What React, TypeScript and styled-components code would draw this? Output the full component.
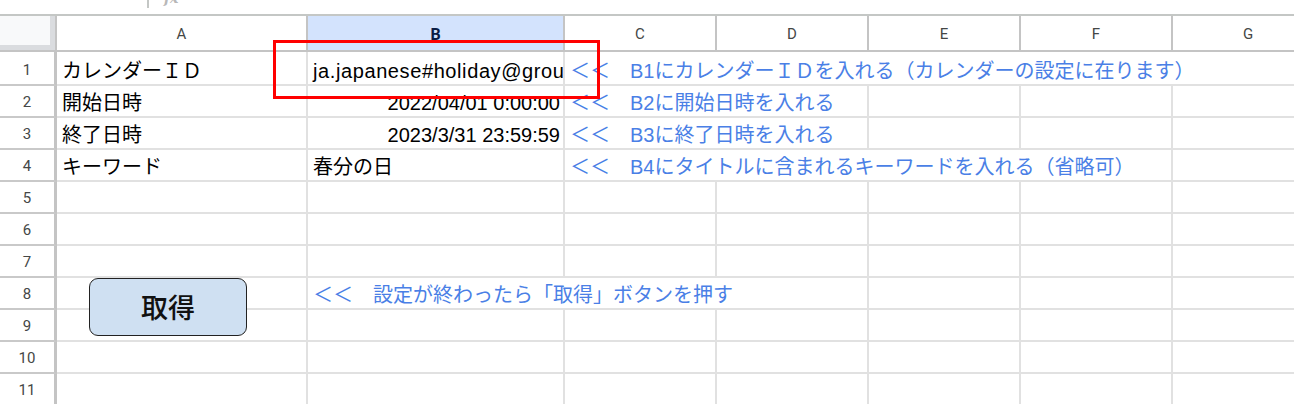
import styled, { createGlobalStyle } from "styled-components";

const GlobalStyle = createGlobalStyle`
    html, body {
        margin: 0;
        padding: 0;
        background: #ffffff;
        overflow: hidden;
    }
    * {
        box-sizing: border-box;
    }
`;

const COLS = "57px 251px 257px 152px 152px 152px 152px 152px";
const FONT = `"Liberation Sans", "Noto Sans CJK JP", sans-serif`;

const Page = styled.div`
    position: relative;
    width: 1294px;
    height: 404px;
    overflow: hidden;
    font-family: ${FONT};
`;

const Toolbar = styled.div`
    display: flex;
    height: 16px;
    border-bottom: 2px solid #c4c7c5;
    overflow: hidden;
`;

const ToolSep = styled.div`
    margin-left: 147px;
    width: 2px;
    height: 8px;
    background: #c4c7c5;
`;

const FxLabel = styled.span`
    margin-left: 15px;
    margin-top: -10px;
    font-family: "DejaVu Serif", serif;
    font-style: italic;
    font-weight: bold;
    font-size: 14px;
    color: #b8b8b8;
`;

const Row = styled.div<{ $h: number }>`
    display: grid;
    grid-template-columns: ${COLS};
    height: ${(p) => p.$h}px;
`;

const Corner = styled.div`
    background: #f8f9fa;
    border-right: 2px solid #c4c4c4;
    border-bottom: 2px solid #c4c4c4;
    box-shadow: inset -5px -5px 0 #dadcdf;
`;

const ColHead = styled.div<{ $active?: boolean }>`
    display: flex;
    align-items: center;
    justify-content: center;
    border-right: 2px solid #c4c4c4;
    border-bottom: 2px solid #c4c4c4;
    background: ${(p) => (p.$active ? "#d3e3fd" : "#ffffff")};
    font-family: Roboto, "Liberation Sans", sans-serif;
    font-size: ${(p) => (p.$active ? 16 : 15)}px;
    font-weight: ${(p) => (p.$active ? 700 : 400)};
    color: ${(p) => (p.$active ? "#0b1d45" : "#444746")};
    padding-top: 2px;
`;

const RowHead = styled.div`
    display: flex;
    align-items: flex-end;
    justify-content: center;
    border-right: 3px solid #c4c4c4;
    border-bottom: 2px solid #c9c9c9;
    padding-bottom: 5px;
    font-family: Roboto, "Liberation Sans", sans-serif;
    font-size: 15px;
    line-height: 17px;
    color: #444746;
`;

const Cell = styled.div<{ $span?: number; $align?: "left" | "right"; $blue?: boolean; $track?: number }>`
    grid-column: span ${(p) => p.$span ?? 1};
    display: flex;
    align-items: flex-end;
    justify-content: ${(p) => (p.$align === "right" ? "flex-end" : "flex-start")};
    padding: 0 3px 1px 5px;
    border-right: 2px solid #e1e1e1;
    border-bottom: 2px solid #e1e1e1;
    overflow: hidden;
    white-space: nowrap;
    font-size: 20px;
    line-height: 24px;
    letter-spacing: ${(p) => p.$track ?? 0}px;
    color: ${(p) => (p.$blue ? "#4a7fe6" : "#000000")};
`;

const RedFrame = styled.div`
    position: absolute;
    left: 273px;
    top: 40px;
    width: 327px;
    height: 59px;
    border: 3px solid #ff0000;
    pointer-events: none;
`;

const GetButton = styled.button`
    position: absolute;
    left: 89px;
    top: 278px;
    width: 158px;
    height: 58px;
    display: flex;
    align-items: center;
    justify-content: center;
    padding: 0 0 2px;
    background: #cfe0f2;
    border: 1.5px solid #222222;
    border-radius: 9px;
    font-family: ${FONT};
    font-size: 27px;
    font-weight: 500;
    color: #111111;
    cursor: pointer;
`;

type CellDef = { text?: string; span?: number; align?: "left" | "right"; blue?: boolean; track?: number };

const columns = ["A", "B", "C", "D", "E", "F", "G"];

const rows: { h: number; cells: CellDef[] }[] = [
    {
        h: 34,
        cells: [
            { text: "カレンダーＩＤ" },
            { text: "ja.japanese#holiday@group.v.calendar.google.com", track: 0.6 },
            { text: "＜＜　B1にカレンダーＩＤを入れる（カレンダーの設定に在ります）", span: 5, blue: true },
        ],
    },
    {
        h: 32,
        cells: [
            { text: "開始日時" },
            { text: "2022/04/01 0:00:00", align: "right" },
            { text: "＜＜　B2に開始日時を入れる", span: 2, blue: true },
            {}, {}, {},
        ],
    },
    {
        h: 32,
        cells: [
            { text: "終了日時" },
            { text: "2023/3/31 23:59:59", align: "right" },
            { text: "＜＜　B3に終了日時を入れる", span: 2, blue: true },
            {}, {}, {},
        ],
    },
    {
        h: 32,
        cells: [
            { text: "キーワード" },
            { text: "春分の日" },
            { text: "＜＜　B4にタイトルに含まれるキーワードを入れる（省略可）", span: 4, blue: true },
            {},
        ],
    },
    { h: 32, cells: [{}, {}, {}, {}, {}, {}, {}] },
    { h: 32, cells: [{}, {}, {}, {}, {}, {}, {}] },
    { h: 32, cells: [{}, {}, {}, {}, {}, {}, {}] },
    {
        h: 32,
        cells: [
            {},
            { text: "＜＜　設定が終わったら「取得」ボタンを押す", span: 3, blue: true },
            {}, {}, {},
        ],
    },
    { h: 32, cells: [{}, {}, {}, {}, {}, {}, {}] },
    { h: 32, cells: [{}, {}, {}, {}, {}, {}, {}] },
    { h: 32, cells: [{}, {}, {}, {}, {}, {}, {}] },
];

export default function App() {
    return (
        <Page>
            <GlobalStyle />
            <Toolbar>
                <ToolSep />
                <FxLabel>fx</FxLabel>
            </Toolbar>
            <Row $h={36}>
                <Corner />
                {columns.map((c) => (
                    <ColHead key={c} $active={c === "B"}>{c}</ColHead>
                ))}
            </Row>
            {rows.map((row, i) => (
                <Row key={i} $h={row.h}>
                    <RowHead>{i + 1}</RowHead>
                    {row.cells.map((cell, j) => (
                        <Cell key={j} $span={cell.span} $align={cell.align} $blue={cell.blue} $track={cell.track}>
                            {cell.text}
                        </Cell>
                    ))}
                </Row>
            ))}
            <RedFrame />
            <GetButton>取得</GetButton>
        </Page>
    );
}
